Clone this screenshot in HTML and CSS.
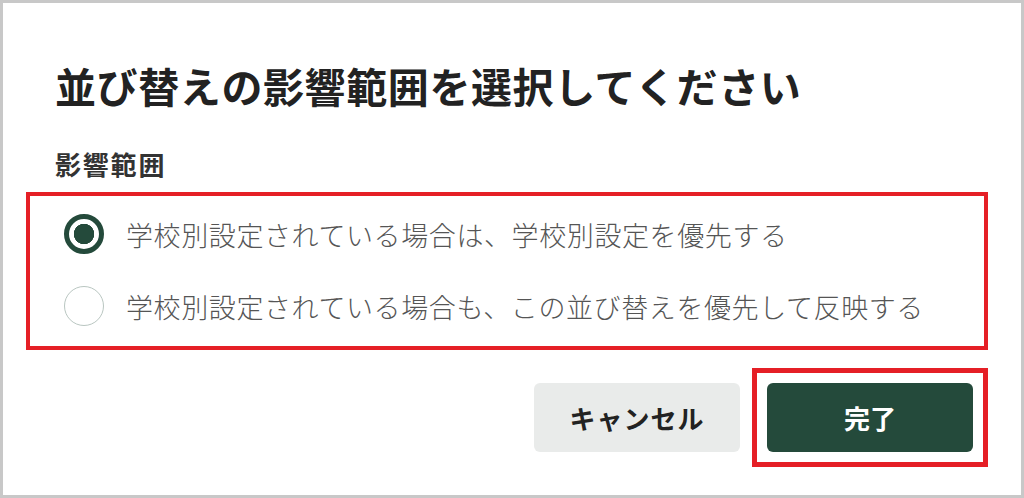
FILE: index.html
```html
<!DOCTYPE html>
<html lang="ja">

<head>
    <meta charset="UTF-8">
    <meta name="viewport" content="width=device-width, initial-scale=1.0">
    <title>並び替えの影響範囲</title>
    <link rel="stylesheet" href="styles.css">
</head>

<body>
    <div class="dialog">
        <h1 class="dialog-title">並び替えの影響範囲を選択してください</h1>

        <h2 class="field-label">影響範囲</h2>

        <div class="options mark">
            <label class="option">
                <input type="radio" name="scope" value="school" checked>
                <span>学校別設定されている場合は、学校別設定を優先する</span>
            </label>
            <label class="option">
                <input type="radio" name="scope" value="sort">
                <span>学校別設定されている場合も、この並び替えを優先して反映する</span>
            </label>
        </div>

        <div class="actions">
            <button type="button" class="btn btn-cancel">キャンセル</button>
            <div class="mark mark-btn">
                <button type="button" class="btn btn-done">完了</button>
            </div>
        </div>
    </div>
</body>

</html>
```

FILE: styles.css
```css
body {
    margin: 0;
    padding: 0;
    background-color: #fff;
    font-family: "Noto Sans CJK JP", "Noto Sans", sans-serif;
}

.dialog {
    box-sizing: border-box;
    width: 1024px;
    height: 498px;
    border: 3px solid #c8c8c8;
    padding: 0 33px 0 52px;
    display: flex;
    flex-direction: column;
}

.dialog-title {
    margin: 57px 0 0;
    font-size: 41px;
    line-height: 50px;
    font-weight: 700;
    letter-spacing: 0.6px;
    color: #222;
}

.field-label {
    margin: 38px 0 0;
    font-size: 26px;
    line-height: 32px;
    font-weight: 700;
    letter-spacing: 1.8px;
    color: #333;
}

/* red annotation frames */
.mark {
    border: 4px solid #e51f26;
}

.options {
    margin: 12px 0 0 -29px;
    padding: 2px 0 4px 34px;
}

.option {
    display: flex;
    align-items: center;
    gap: 22px;
    height: 72px;
    font-size: 27px;
    font-weight: 300;
    letter-spacing: 0.6px;
    color: #555;
}

.option input {
    appearance: none;
    margin: 0;
    box-sizing: border-box;
    width: 40px;
    height: 40px;
    border-radius: 50%;
    border: 1.5px solid #b9c6c1;
    background-color: #fff;
    flex-shrink: 0;
}

.option input:checked {
    border: 5px solid #244a3b;
    background: radial-gradient(circle, #244a3b 0 10px, #fff 10.5px);
}

.actions {
    margin-top: 18px;
    display: flex;
    justify-content: flex-end;
    align-items: center;
    gap: 12px;
}

.mark-btn {
    border-width: 5px;
    padding: 10px;
    display: flex;
}

.btn {
    width: 206px;
    height: 69px;
    border: none;
    border-radius: 6px;
    font-family: inherit;
    font-size: 26px;
    font-weight: 700;
    cursor: pointer;
}

.btn-cancel {
    background-color: #e9ebea;
    color: #222;
    letter-spacing: 1px;
}

.btn-done {
    background-color: #244a3b;
    color: #fff;
}
```
